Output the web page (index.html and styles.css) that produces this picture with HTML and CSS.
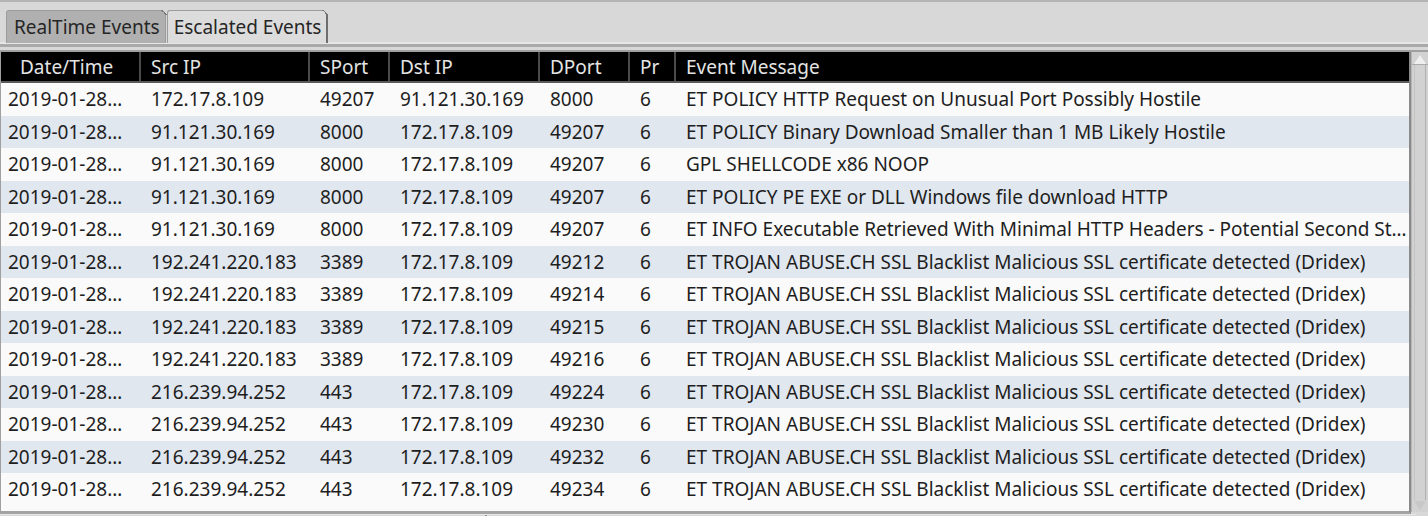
FILE: index.html
```html
<!DOCTYPE html>
<html lang="en">
<head>
    <meta charset="UTF-8">
    <title>Escalated Events</title>
    <link rel="stylesheet" href="styles.css">
</head>
<body>
    <div class="tabbar">
        <div class="tab">RealTime Events</div>
        <div class="tab active">Escalated Events</div>
    </div>
    <div class="panel">
        <div class="grid">
            <table class="events">
                <colgroup>
                    <col class="c-date"><col class="c-src"><col class="c-sport"><col class="c-dst">
                    <col class="c-dport"><col class="c-pr"><col class="c-msg">
                </colgroup>
                <thead>
                    <tr>
                        <th class="first">Date/Time</th><th>Src IP</th><th>SPort</th><th>Dst IP</th>
                        <th>DPort</th><th>Pr</th><th>Event Message</th>
                    </tr>
                </thead>
                <tbody>
                    <tr><td>2019-01-28…</td><td>172.17.8.109</td><td>49207</td><td>91.121.30.169</td><td>8000</td><td>6</td><td>ET POLICY HTTP Request on Unusual Port Possibly Hostile</td></tr>
                    <tr><td>2019-01-28…</td><td>91.121.30.169</td><td>8000</td><td>172.17.8.109</td><td>49207</td><td>6</td><td>ET POLICY Binary Download Smaller than 1 MB Likely Hostile</td></tr>
                    <tr><td>2019-01-28…</td><td>91.121.30.169</td><td>8000</td><td>172.17.8.109</td><td>49207</td><td>6</td><td>GPL SHELLCODE x86 NOOP</td></tr>
                    <tr><td>2019-01-28…</td><td>91.121.30.169</td><td>8000</td><td>172.17.8.109</td><td>49207</td><td>6</td><td>ET POLICY PE EXE or DLL Windows file download HTTP</td></tr>
                    <tr><td>2019-01-28…</td><td>91.121.30.169</td><td>8000</td><td>172.17.8.109</td><td>49207</td><td>6</td><td>ET INFO Executable Retrieved With Minimal HTTP Headers - Potential Second St…</td></tr>
                    <tr><td>2019-01-28…</td><td>192.241.220.183</td><td>3389</td><td>172.17.8.109</td><td>49212</td><td>6</td><td>ET TROJAN ABUSE.CH SSL Blacklist Malicious SSL certificate detected (Dridex)</td></tr>
                    <tr><td>2019-01-28…</td><td>192.241.220.183</td><td>3389</td><td>172.17.8.109</td><td>49214</td><td>6</td><td>ET TROJAN ABUSE.CH SSL Blacklist Malicious SSL certificate detected (Dridex)</td></tr>
                    <tr><td>2019-01-28…</td><td>192.241.220.183</td><td>3389</td><td>172.17.8.109</td><td>49215</td><td>6</td><td>ET TROJAN ABUSE.CH SSL Blacklist Malicious SSL certificate detected (Dridex)</td></tr>
                    <tr><td>2019-01-28…</td><td>192.241.220.183</td><td>3389</td><td>172.17.8.109</td><td>49216</td><td>6</td><td>ET TROJAN ABUSE.CH SSL Blacklist Malicious SSL certificate detected (Dridex)</td></tr>
                    <tr><td>2019-01-28…</td><td>216.239.94.252</td><td>443</td><td>172.17.8.109</td><td>49224</td><td>6</td><td>ET TROJAN ABUSE.CH SSL Blacklist Malicious SSL certificate detected (Dridex)</td></tr>
                    <tr><td>2019-01-28…</td><td>216.239.94.252</td><td>443</td><td>172.17.8.109</td><td>49230</td><td>6</td><td>ET TROJAN ABUSE.CH SSL Blacklist Malicious SSL certificate detected (Dridex)</td></tr>
                    <tr><td>2019-01-28…</td><td>216.239.94.252</td><td>443</td><td>172.17.8.109</td><td>49232</td><td>6</td><td>ET TROJAN ABUSE.CH SSL Blacklist Malicious SSL certificate detected (Dridex)</td></tr>
                    <tr><td>2019-01-28…</td><td>216.239.94.252</td><td>443</td><td>172.17.8.109</td><td>49234</td><td>6</td><td>ET TROJAN ABUSE.CH SSL Blacklist Malicious SSL certificate detected (Dridex)</td></tr>
                </tbody>
            </table>
        </div>
        <div class="vscroll">
            <div class="arrow up"></div>
            <div class="track"></div>
            <div class="arrow down"></div>
        </div>
    </div>
    <div class="hscroll"><div class="knob"></div></div>
</body>
</html>
```

FILE: styles.css
```css
body {
    margin: 0;
    background: #d8d8d8;
    font-family: "Noto Sans", "Open Sans", sans-serif;
    font-size: 19px;
    color: #1e1e1e;
    overflow: hidden;
    height: 516px;
}
.tabbar {
    display: flex;
    height: 34px;
    padding: 8px 0 0 6px;
    border-top: 2px solid #b4b4b4;
    border-bottom: 3px solid #a9a9a9;
    box-shadow: inset 0 -2px 0 #e6e6e6;
}
.tab {
    height: 32px;
    line-height: 33px;
    padding: 0 5px 0 7px;
    margin-right: 1px;
    background: #b0b0b0;
    border: 1px solid #9c9c9c;
    border-bottom: none;
    border-radius: 3px 0 0 0;
    position: relative;
    color: #262626;
}
.tab.active {
    background: #dcdcdc;
    border-right: 2px solid #6e6e6e;
    padding: 0 5px 0 6px;
}
.tab::after {
    content: "";
    position: absolute;
    right: -2px;
    top: -1px;
    width: 6px;
    height: 6px;
    background: linear-gradient(45deg, transparent 50%, #777 50%, #777 65%, #d8d8d8 65%);
}
.panel {
    display: flex;
    margin-top: 3px;
    border-left: 1px solid #a0a0a0;
    border-top: 2px solid #a0a0a0;
}
.grid {
    flex: 1;
    overflow: hidden;
    background: #fafafa;
    height: 459px;
    border-bottom: 3px solid #a4a4a4;
    border-right: 2px solid #8a8a8a;
}
.events {
    border-collapse: collapse;
    table-layout: fixed;
    width: 1409px;
}
.c-date { width: 139px; }
.c-src { width: 169px; }
.c-sport { width: 80px; }
.c-dst { width: 150px; }
.c-dport { width: 90px; }
.c-pr { width: 46px; }
.c-msg { width: 735px; }
.events th {
    background: #000;
    color: #e4e4e4;
    font-weight: normal;
    text-align: left;
    height: 28px;
    padding: 1px 0 0 10px;
    border-left: 2px solid #4a4a4a;
    border-bottom: 2px solid #5a5a5a;
    white-space: nowrap;
}
.events th.first {
    padding-left: 19px;
    border-left: none;
}
.events td {
    height: 32.5px;
    padding: 0 4px 0 11px;
    white-space: nowrap;
    overflow: hidden;
    text-overflow: ellipsis;
}
.events td:first-child {
    padding-left: 7px;
}
.events td:last-child {
    padding-right: 0;
}
.events tbody tr:nth-child(even) td {
    background: #e1e7ef;
}
.vscroll {
    width: 16px;
    display: flex;
    flex-direction: column;
    background: #d2d2d2;
    border-left: 1px solid #b6b6b6;
    height: 460px;
}
.vscroll .track {
    flex: 1;
    margin: 0 2px;
    border-left: 1px solid #c4c4c4;
    border-right: 1px solid #b0b0b0;
}
.arrow {
    height: 12px;
    display: flex;
    justify-content: center;
}
.arrow.up {
    border-bottom: 1px solid #aaa;
}
.arrow.up::before {
    content: "";
    margin-top: 2px;
    border-left: 6px solid transparent;
    border-right: 6px solid transparent;
    border-bottom: 9px solid #efefef;
}
.arrow.down::before {
    content: "";
    margin-top: 1px;
    border-left: 6px solid transparent;
    border-right: 6px solid transparent;
    border-top: 9px solid #c8c8c8;
}
.hscroll {
    height: 6px;
    border-top: 1px solid #e8e8e8;
    margin-right: 12px;
    background: #d6d6d6;
    position: relative;
}
.hscroll .knob {
    position: absolute;
    left: 485px;
    top: 0;
    width: 2px;
    height: 4px;
    background: #999;
}
```
